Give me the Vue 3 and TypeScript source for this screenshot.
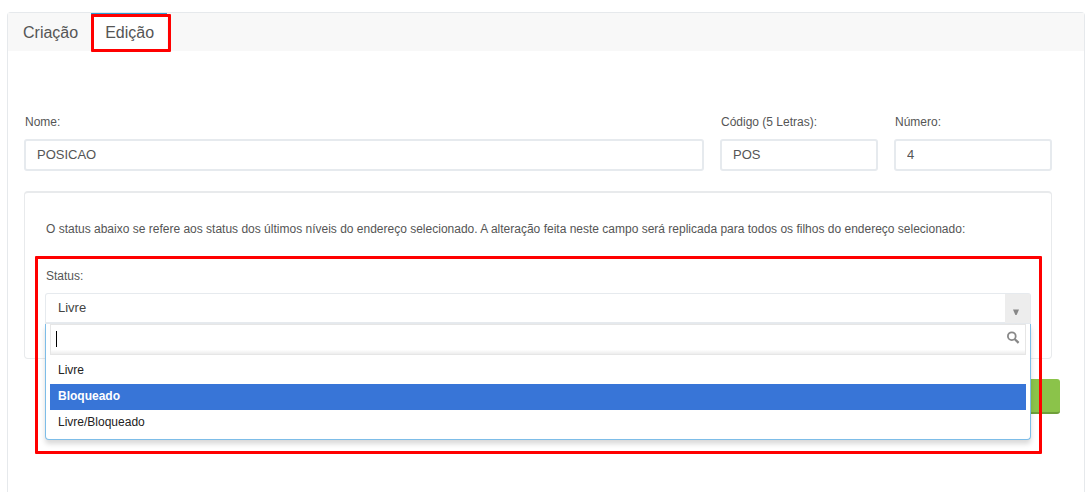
<script setup lang="ts">
import { computed, ref } from 'vue'

type Tab = 'Criação' | 'Edição'

const tabs: Tab[] = ['Criação', 'Edição']
const activeTab = ref<Tab>('Edição')

const nome = ref('POSICAO')
const codigo = ref('POS')
const numero = ref('4')

const statuses: string[] = ['Livre', 'Bloqueado', 'Livre/Bloqueado']
const status = ref('Livre')
const highlighted = ref('Bloqueado')
const open = ref(true)
const query = ref('')
const matches = computed(() =>
  statuses.filter((s) => s.toLowerCase().includes(query.value.toLowerCase())),
)

function choose(value: string): void {
  status.value = value
  query.value = ''
  open.value = false
}
</script>

<template>
  <main class="page">
    <section class="panel">
      <nav class="tabs" role="tablist">
        <button
          v-for="tab in tabs"
          :key="tab"
          type="button"
          role="tab"
          class="tab"
          :class="{ active: tab === activeTab }"
          :aria-selected="tab === activeTab"
          @click="activeTab = tab"
        >
          {{ tab }}
          <span v-if="tab === activeTab" class="mark tab-mark"></span>
        </button>
      </nav>

      <form class="form" @submit.prevent>
        <div class="fields">
          <div class="field">
            <label for="nome">Nome:</label>
            <input id="nome" v-model="nome" class="text" type="text" />
          </div>
          <div class="field">
            <label for="codigo">Código (5 Letras):</label>
            <input id="codigo" v-model="codigo" class="text" type="text" maxlength="5" />
          </div>
          <div class="field">
            <label for="numero">Número:</label>
            <input id="numero" v-model="numero" class="text" type="text" />
          </div>
        </div>

        <div class="box">
          <p class="note">
            O status abaixo se refere aos status dos últimos níveis do endereço selecionado. A alteração feita neste campo será replicada para todos os filhos do endereço selecionado:
          </p>
          <div class="status">
            <label for="status">Status:</label>
            <div class="chooser">
              <select id="status" v-model="status" class="select" @mousedown.prevent="open = !open">
                <option v-for="s in statuses" :key="s">{{ s }}</option>
              </select>
              <span class="arrow">
                <svg width="8" height="7" viewBox="0 0 8 7" aria-hidden="true">
                  <path d="M1 0.5H7L4.6 6H3.4Z" fill="#888" />
                </svg>
              </span>
              <div v-if="open" class="drop">
                <div class="search">
                  <span v-if="!query" class="caret"></span>
                  <input v-model="query" class="query" type="text" aria-label="Status" autocomplete="off" />
                  <svg class="lens" width="14" height="14" viewBox="0 0 14 14" aria-hidden="true">
                    <circle cx="5.8" cy="5.2" r="3.9" fill="none" stroke="#888" stroke-width="1.8" />
                    <path d="M8.6 8L12.6 11.8" stroke="#888" stroke-width="2.3" />
                  </svg>
                </div>
                <ul class="options" role="listbox">
                  <li
                    v-for="s in matches"
                    :key="s"
                    role="option"
                    class="option"
                    :class="{ highlighted: s === highlighted }"
                    :aria-selected="s === status"
                    @mouseenter="highlighted = s"
                    @click="choose(s)"
                  >
                    {{ s }}
                  </li>
                </ul>
              </div>
            </div>
            <span class="mark status-mark"></span>
          </div>
        </div>

        <div class="actions">
          <button class="save" type="submit" aria-label="Salvar"></button>
        </div>
      </form>
    </section>
  </main>
</template>

<style>
body {
  margin: 0;
  background: #fff;
}
</style>

<style scoped>
* {
  box-sizing: border-box;
}

.page {
  display: flex;
  min-height: 100vh;
  padding: 12px 4px 0 7px;
  font-family: "Liberation Sans", Arial, sans-serif;
  font-size: 12px;
  line-height: 16px;
  color: #555;
}

.panel {
  flex: 1;
  min-width: 0;
  border: 1px solid #e6e9ec;
  border-bottom: 0;
  border-radius: 4px 4px 0 0;
}

.tabs {
  display: flex;
  height: 38px;
  background: #f8f8f8;
}

.tab {
  position: relative;
  padding: 0 13px 0 15px;
  border: 0;
  border-top: 2px solid transparent;
  background: none;
  font: inherit;
  font-size: 16px;
  color: #555;
  cursor: pointer;
}

.tab.active {
  padding-left: 14px;
  border-top-color: #2a9fd8;
  background: #fff;
}

.mark {
  position: absolute;
  border: 3px solid #f00;
  border-radius: 1px;
  pointer-events: none;
}

.tab-mark {
  inset: -1px -4px -1px 0;
}

.form {
  padding: 63px 32px 40px 16px;
}

.fields {
  display: grid;
  grid-template-columns: 680fr 158fr 158fr;
  gap: 16px;
}

.field,
.status {
  display: flex;
  flex-direction: column;
  gap: 9px;
  min-width: 0;
}

label,
.note {
  padding-left: 1px;
}

.text {
  width: 100%;
  height: 32px;
  padding: 0 11px 2px;
  border: 2px solid #e6eaee;
  border-radius: 3px;
  background: #fff;
  font: inherit;
  font-size: 13px;
  color: #555;
  outline: 0;
}

.box {
  margin-top: 20px;
  padding: 28px 20px 34px;
  border: 1px solid #e8eaec;
  border-top-width: 2px;
  border-radius: 4px;
}

.note {
  margin: 0 0 31px;
}

.status {
  position: relative;
}

.chooser {
  position: relative;
}

.select {
  display: block;
  width: 100%;
  height: 31px;
  padding: 0 32px 0 12px;
  border: 1px solid #e6eaee;
  border-bottom-width: 2px;
  border-radius: 3px 3px 0 0;
  appearance: none;
  background: #fff;
  font: inherit;
  font-size: 13px;
  color: #444;
  outline: 0;
}

.arrow {
  position: absolute;
  top: 1px;
  right: 1px;
  display: flex;
  align-items: center;
  justify-content: center;
  width: 25px;
  height: 29px;
  padding: 8px 3px 0 0;
  background: #ededed;
  pointer-events: none;
}

.drop {
  position: absolute;
  z-index: 1;
  top: 100%;
  left: 0;
  right: 0;
  padding: 0 4px 3px;
  border: 1px solid #7dbde8;
  border-top: 0;
  border-radius: 0 0 4px 4px;
  background: #fff;
  box-shadow: 0 4px 5px rgba(0, 0, 0, 0.15);
}

.search {
  position: relative;
  display: flex;
  height: 31px;
  border: 1px solid #e6e6e6;
  background: linear-gradient(#fff 85%, #eee 99%);
}

.query {
  flex: 1;
  min-width: 0;
  padding: 0 24px 0 5px;
  border: 0;
  background: none;
  font: inherit;
  outline: 0;
}

.caret {
  position: absolute;
  top: 6px;
  left: 5px;
  width: 1px;
  height: 16px;
  background: #000;
}

.lens {
  position: absolute;
  top: 6px;
  right: 5px;
}

.options {
  margin: 0;
  padding: 3px 0 0;
  list-style: none;
}

.option {
  padding: 4px 8px 6px;
  color: #222;
  cursor: pointer;
}

.option.highlighted {
  background: #3875d7;
  color: #fff;
  font-weight: bold;
}

.status-mark {
  z-index: 2;
  inset: -12px -11px -130px -10px;
}

.actions {
  display: flex;
  justify-content: flex-end;
  margin: 20px -8px 0 0;
}

.save {
  width: 100px;
  height: 35px;
  border: 0;
  border-bottom: 2px solid #6f9f3a;
  border-radius: 3px;
  background: #8bc34a;
  cursor: pointer;
}
</style>
